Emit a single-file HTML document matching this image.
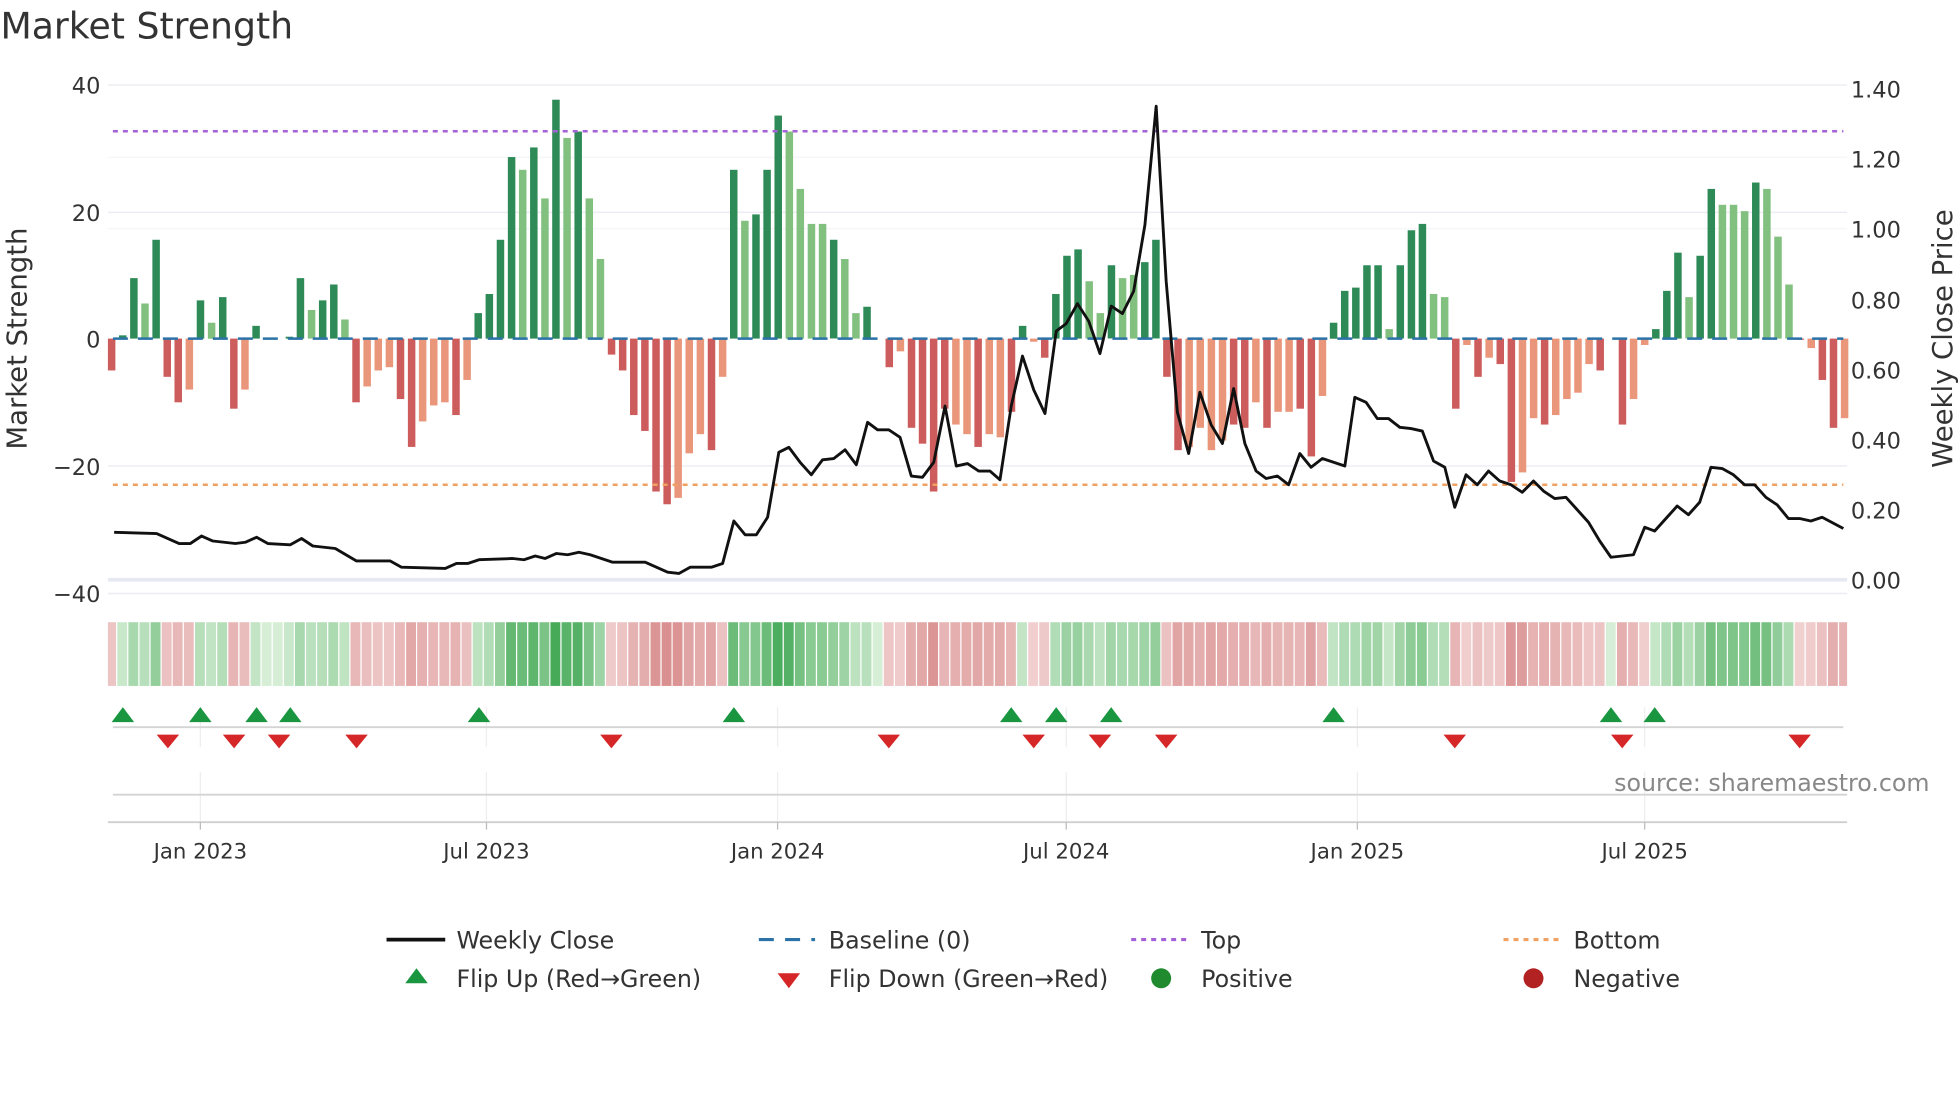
<!DOCTYPE html>
<html><head><meta charset="utf-8"><style>
html,body{margin:0;padding:0;background:#fff;}
svg{display:block;font-family:"DejaVu Sans","Liberation Sans",sans-serif;}
</style></head><body>
<svg id="s" width="1960" height="1102" viewBox="0 0 1568 882" xmlns="http://www.w3.org/2000/svg">
<text x="0" y="31" font-size="29" fill="#333">Market Strength</text>
<g stroke="#ebedf3" stroke-width="1.2">
<line x1="86" y1="68" x2="1478" y2="68"/><line x1="86" y1="170" x2="1478" y2="170"/>
<line x1="86" y1="373" x2="1478" y2="373"/><line x1="86" y1="475" x2="1478" y2="475"/>
<line x1="86" y1="126" x2="1478" y2="126" stroke="#f5f6f9"/><line x1="86" y1="183" x2="1478" y2="183" stroke="#f5f6f9"/>
</g>
<line x1="86" y1="464" x2="1478" y2="464" stroke="#e6e9f2" stroke-width="3"/>
<g font-size="18" fill="#333">
<text x="80" y="75" text-anchor="end">40</text>
<text x="80" y="177" text-anchor="end">20</text>
<text x="80" y="278" text-anchor="end">0</text>
<text x="80" y="380" text-anchor="end">−20</text>
<text x="80" y="482" text-anchor="end">−40</text>
<text x="1481" y="78">1.40</text><text x="1481" y="134">1.20</text><text x="1481" y="190">1.00</text>
<text x="1481" y="247">0.80</text><text x="1481" y="303">0.60</text><text x="1481" y="359">0.40</text>
<text x="1481" y="415">0.20</text><text x="1481" y="471">0.00</text>
</g>
<text transform="translate(21,271) rotate(-90)" font-size="22" fill="#333" text-anchor="middle">Market Strength</text>
<text transform="translate(1562,271) rotate(-90)" font-size="22" fill="#333" text-anchor="middle">Weekly Close Price</text>
<g id="bars"></g>
<line x1="90" y1="271" x2="1475" y2="271" stroke="#2a72a8" stroke-width="2" stroke-dasharray="12,8"/>
<line x1="90" y1="105" x2="1475" y2="105" stroke="#a461d8" stroke-width="2" stroke-dasharray="4,4"/>
<line x1="90" y1="388" x2="1475" y2="388" stroke="#f0a060" stroke-width="2" stroke-dasharray="4,4"/>
<polyline fill="none" stroke="#111" stroke-width="2.3" stroke-linejoin="round" points="91,426 125,427 134,431 143,435 152,435 161,429 170,433 188,435 196,434 205,430 214,435 232,436 241,431 250,437 259,438 268,439 285,449 312,449 321,454 356,455 365,451 374,451 383,448 410,447 419,448 428,445 436,447 445,443 454,444 463,442 472,444 490,450 516,450 525,454 534,458 543,459 552,454 569,454 578,451 587,417 596,428 605,428 614,414 623,362 631,358 640,370 649,380 658,368 667,367 676,360 685,372 694,338 702,344 711,344 720,350 729,381 738,382 747,370 756,325 765,373 774,371 783,377 792,377 800,384 809,325 818,285 827,312 836,331 845,265 853,259 862,243 871,257 880,283 889,245 898,251 907,233 916,180 925,85 933,225 942,330 951,363 960,314 969,340 978,355 987,311 996,355 1005,377 1013,383 1022,381 1031,388 1040,363 1049,374 1058,367 1067,370 1076,373 1084,318 1093,322 1102,335 1111,335 1120,342 1129,343 1138,345 1147,369 1156,374 1164,406 1173,380 1182,388 1191,377 1200,385 1209,388 1218,394 1227,385 1235,393 1244,399 1253,398 1262,408 1271,418 1280,433 1289,446 1298,445 1307,444 1316,422 1324,425 1333,415 1342,405 1351,412 1360,402 1369,374 1378,375 1387,380 1396,388 1404,388 1413,398 1422,404 1431,415 1440,415 1449,417 1458,414 1475,423"/>
<g id="heat"></g>
<g stroke="#eeeeee" stroke-width="1">
<line x1="160" y1="566" x2="160" y2="598"/><line x1="389" y1="566" x2="389" y2="598"/><line x1="622" y1="566" x2="622" y2="598"/><line x1="853" y1="566" x2="853" y2="598"/><line x1="1086" y1="566" x2="1086" y2="598"/><line x1="1316" y1="566" x2="1316" y2="598"/>
<line x1="160" y1="618" x2="160" y2="658"/><line x1="389" y1="618" x2="389" y2="658"/><line x1="622" y1="618" x2="622" y2="658"/><line x1="853" y1="618" x2="853" y2="658"/><line x1="1086" y1="618" x2="1086" y2="658"/><line x1="1316" y1="618" x2="1316" y2="658"/>
</g>
<line x1="90" y1="582" x2="1475" y2="582" stroke="#d4d4d4" stroke-width="1.5"/>
<line x1="90" y1="636" x2="1478" y2="636" stroke="#d4d4d4" stroke-width="1.5"/>
<line x1="86" y1="658" x2="1478" y2="658" stroke="#cfcfcf" stroke-width="1.5"/>
<g stroke="#bbb" stroke-width="1"><line x1="160" y1="658" x2="160" y2="664"/><line x1="389" y1="658" x2="389" y2="664"/><line x1="622" y1="658" x2="622" y2="664"/><line x1="853" y1="658" x2="853" y2="664"/><line x1="1086" y1="658" x2="1086" y2="664"/><line x1="1316" y1="658" x2="1316" y2="664"/></g>
<g id="marks"></g>
<g font-size="17" fill="#333" text-anchor="middle">
<text x="160" y="687">Jan 2023</text><text x="389" y="687">Jul 2023</text><text x="622" y="687">Jan 2024</text>
<text x="853" y="687">Jul 2024</text><text x="1086" y="687">Jan 2025</text><text x="1316" y="687">Jul 2025</text>
</g>
<text x="1544" y="633" font-size="19" fill="#888" text-anchor="end">source: sharemaestro.com</text>
<g font-size="19" fill="#333">
<line x1="309" y1="752" x2="356" y2="752" stroke="#111" stroke-width="3"/><text x="365" y="759">Weekly Close</text>
<line x1="607" y1="752" x2="652" y2="752" stroke="#2a72a8" stroke-width="2.5" stroke-dasharray="12,9"/><text x="663" y="759">Baseline (0)</text>
<line x1="905" y1="752" x2="950" y2="752" stroke="#a461d8" stroke-width="2.5" stroke-dasharray="4,4"/><text x="961" y="759">Top</text>
<line x1="1203" y1="752" x2="1248" y2="752" stroke="#f0a060" stroke-width="2.5" stroke-dasharray="4,4"/><text x="1259" y="759">Bottom</text>
<polygon points="333,775 342,787 324,787" fill="#1a9641"/><text x="365" y="790">Flip Up (Red→Green)</text>
<polygon points="622,779 640,779 631,791" fill="#d62728"/><text x="663" y="790">Flip Down (Green→Red)</text>
<circle cx="929" cy="783" r="8" fill="#1f8a2e"/><text x="961" y="790">Positive</text>
<circle cx="1227" cy="783" r="8" fill="#b22222"/><text x="1259" y="790">Negative</text>
</g>
</svg>
<script>
var d="-5r 0.5g 9.5g 5.5l 15.5g -6r -10r -8s 6g 2.5l 6.5g -11r -8s 2g 0 0 0.3g 9.5g 4.5l 6g 8.5g 3l -10r -7.5s -5s -4.5s -9.5r -17r -13s -10.5s -10s -12r -6.5s 4g 7g 15.5g 28.5g 26.5l 30g 22l 37.5g 31.5l 32.5g 22l 12.5l -2.5r -5r -12r -14.5r -24r -26r -25s -18s -15s -17.5r -6s 26.5g 18.5l 19.5g 26.5g 35g 32.5l 23.5l 18l 18l 15.5g 12.5l 4l 5g 0 -4.5r -2s -14r -16.5r -24r -11r -13.5s -15s -17r -15s -15.5s -11.5r 2g -0.5s -3r 7g 13g 14g 9l 4l 11.5g 9.5l 10l 12g 15.5g -6r -17.5r -17s -14s -17.5s -16s -13.5r -14r -10s -14r -11.5s -11.5s -11r -18.5r -9s 2.5g 7.5g 8g 11.5g 11.5g 1.5l 11.5g 17g 18g 7l 6.5l -11r -1s -6r -3s -4r -22.5r -21s -12.5s -13.5r -12s -9.5s -8.5s -4s -5r 0 -13.5r -9.5s -1s 1.5g 7.5g 13.5g 6.5l 13g 23.5g 21l 21l 20l 24.5g 23.5l 16l 8.5l -0.2r -1.5s -6.5r -14r -12.5s".split(" ");
var n=d.length,x0=89,x1=1476,st=(x1-x0)/(n-1),col={g:"#2e8b57",l:"#82c07f",r:"#cd5c5c",s:"#e9967a"};
var b="",h="";
function mix(a,c,t){return "rgb("+a.map(function(v,i){return Math.round(v+(c[i]-v)*t)}).join(",")+")";}
for(var i=0;i<n;i++){var v=parseFloat(d[i]),c=d[i].slice(-1),x=x0+i*st;
 if(v!==0){var y=271-v*5.1;b+='<rect x="'+(x-3).toFixed(1)+'" y="'+Math.min(y,271).toFixed(1)+'" width="6" height="'+Math.abs(v*5.1).toFixed(1)+'" fill="'+col[c]+'"/>';}
 var t=Math.min(1,0.08+Math.abs(v)/40);
 var fc=v>=0?mix([214,238,214],[70,170,88],t):mix([244,216,216],[208,118,118],t);
 if(v===0)fc="#d6eed6";
 var lx=Math.max(86,x-4.4),rx=Math.min(1478,x-4.4+st-1);
 h+='<rect x="'+lx.toFixed(1)+'" y="498" width="'+(rx-lx).toFixed(1)+'" height="51" fill="'+fc+'"/>';}
document.getElementById("bars").innerHTML=b;document.getElementById("heat").innerHTML=h;
var m="";[98,160,205,232,383,587,809,845,889,1067,1289,1324].forEach(function(x){m+='<polygon points="'+x+',566 '+(x+9)+',578 '+(x-9)+',578" fill="#1a9641"/>';});
[134,187,223,285,489,711,827,880,933,1164,1298,1440].forEach(function(x){m+='<polygon points="'+(x-9)+',588 '+(x+9)+',588 '+x+',599" fill="#d62728"/>';});
document.getElementById("marks").innerHTML=m;
</script>
</body></html>
